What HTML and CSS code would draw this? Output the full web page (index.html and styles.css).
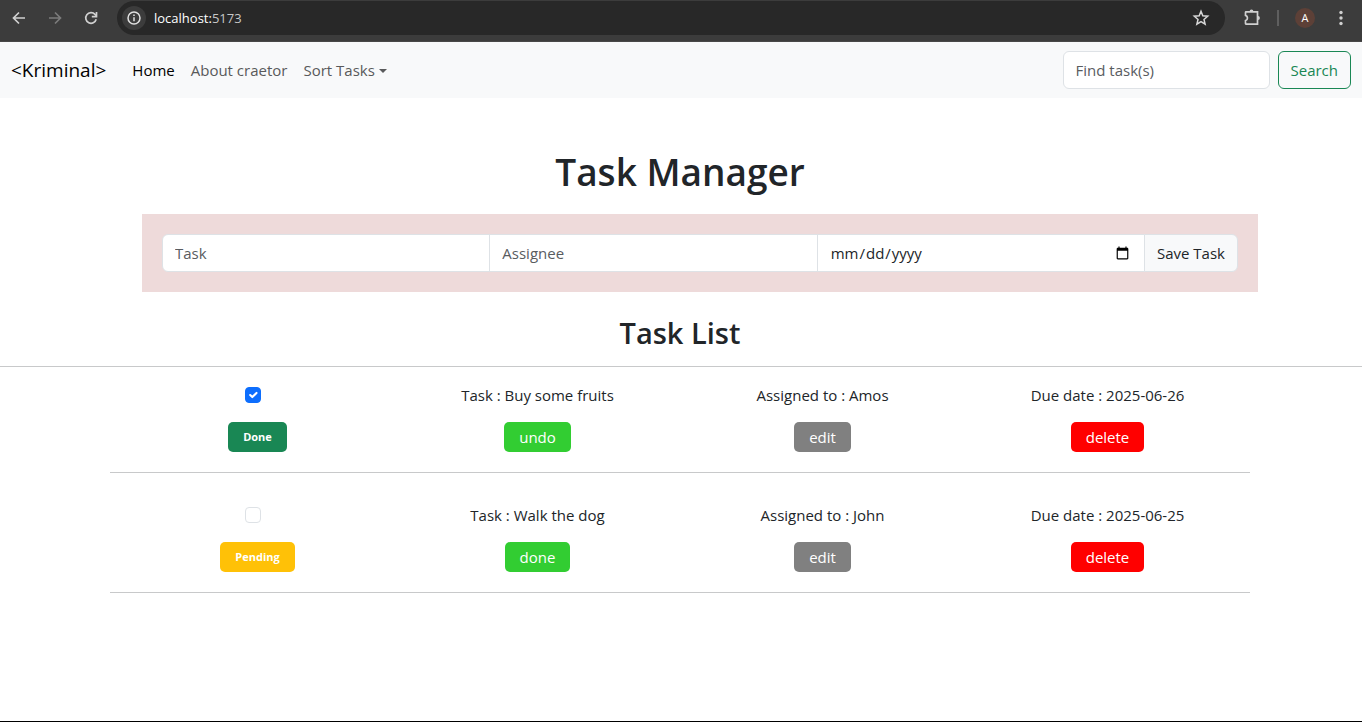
FILE: index.html
```html
<!DOCTYPE html>
<html lang="en">
<head>
<meta charset="utf-8">
<title>Task Manager</title>
<link rel="stylesheet" href="styles.css">
</head>
<body>
<div class="browser-bar">
  <div class="history">
    <button class="tool" type="button" aria-label="Back">
      <svg width="16" height="16" viewBox="0 0 16 16" fill="none" stroke="#d0d0d0" stroke-width="1.7"><path d="M14 8H3M8 2.5 2.5 8 8 13.5"/></svg>
    </button>
    <button class="tool" type="button" aria-label="Forward">
      <svg width="16" height="16" viewBox="0 0 16 16" fill="none" stroke="#7b7b7b" stroke-width="1.7"><path d="M2 8h11M8 2.5 13.500 8 8 13.500"/></svg>
    </button>
    <button class="tool" type="button" aria-label="Reload">
      <svg width="16" height="16" viewBox="0 0 16 16" fill="none" stroke="#d0d0d0" stroke-width="1.7"><path d="M13.200 9.300A5.300 5.300 0 1 1 12 4.400L13.500 6"/><path d="M13.500 2v4.700H8.800"/></svg>
    </button>
  </div>
  <div class="address">
    <button class="site-info" type="button" aria-label="Site information">
      <svg width="16" height="16" viewBox="0 0 16 16" fill="none" stroke="#e0e0e0" stroke-width="1.500"><circle cx="8" cy="8" r="6"/><path d="M8 7.200v4M8 4.500v1.500"/></svg>
    </button>
    <span class="url"><span class="host">localhost:</span>5173</span>
    <button class="tool" type="button" aria-label="Bookmark">
      <svg width="18" height="18" viewBox="0 0 18 18" fill="none" stroke="#d8d8d8" stroke-width="1.500"><path d="m9 2.300 1.800 4.500 4.900.4-3.700 3.200 1.100 4.800L9 12.600l-4.100 2.600L6 10.400 2.300 7.200l4.900-.4z"/></svg>
    </button>
  </div>
  <button class="tool extensions" type="button" aria-label="Extensions">
    <svg width="18" height="18" viewBox="0 0 18 18" fill="none" stroke="#d0d0d0" stroke-width="1.700"><path d="M3 2.900h11.500v12.200H3q-.5 0-.5-.5v-3a2.700 2.700 0 0 0 0-5.200v-3q0-.5.5-.5z"/><path d="M6.600 2.500a1.900 1.900 0 0 1 3.800 0zM15 7.100a1.900 1.900 0 0 1 0 3.800z" fill="#d0d0d0" stroke="none"/></svg>
  </button>
  <span class="divider"></span>
  <button class="avatar" type="button">A</button>
  <button class="tool menu" type="button" aria-label="Menu">
    <svg width="16" height="16" viewBox="0 0 16 16" fill="#d0d0d0"><circle cx="8" cy="2.500" r="1.700"/><circle cx="8" cy="8" r="1.700"/><circle cx="8" cy="13.500" r="1.700"/></svg>
  </button>
</div>

<nav class="navbar">
  <a class="brand" href="#">&lt;Kriminal&gt;</a>
  <a class="nav-link active" href="#">Home</a>
  <a class="nav-link" href="#">About craetor</a>
  <a class="nav-link dropdown" href="#">Sort Tasks</a>
  <form class="search">
    <input class="field search-field" type="search" placeholder="Find task(s)" aria-label="Find tasks">
    <button class="search-button" type="submit">Search</button>
  </form>
</nav>

<main class="page">
  <h1 class="title">Task Manager</h1>
  <div class="container">
    <form class="task-form">
      <input class="field" type="text" placeholder="Task" aria-label="Task">
      <input class="field" type="text" placeholder="Assignee" aria-label="Assignee">
      <input class="field" type="date" aria-label="Due date">
      <button class="save" type="submit">Save Task</button>
    </form>
  </div>
  <h2 class="subtitle">Task List</h2>
  <hr class="rule">
  <ul class="container tasks">
    <li class="task">
      <div class="cell"><input class="check" type="checkbox" aria-label="Buy some fruits" checked></div>
      <div class="cell">Task : Buy some fruits</div>
      <div class="cell">Assigned to : Amos</div>
      <div class="cell">Due date : 2025-06-26</div>
      <div class="cell"><span class="badge finished">Done</span></div>
      <div class="cell"><button class="action toggle" type="button">undo</button></div>
      <div class="cell"><button class="action edit" type="button">edit</button></div>
      <div class="cell"><button class="action delete" type="button">delete</button></div>
    </li>
    <li class="task">
      <div class="cell"><input class="check" type="checkbox" aria-label="Walk the dog"></div>
      <div class="cell">Task : Walk the dog</div>
      <div class="cell">Assigned to : John</div>
      <div class="cell">Due date : 2025-06-25</div>
      <div class="cell"><span class="badge pending">Pending</span></div>
      <div class="cell"><button class="action toggle" type="button">done</button></div>
      <div class="cell"><button class="action edit" type="button">edit</button></div>
      <div class="cell"><button class="action delete" type="button">delete</button></div>
    </li>
  </ul>
</main>
</body>
</html>
```
FILE: styles.css
```css
* {
  box-sizing: border-box;
}

body {
  display: flex;
  flex-direction: column;
  min-height: 100vh;
  margin: 0;
  border-bottom: 1px solid #000;
  background: #fff;
  color: #212529;
  font-family: "Open Sans", "Noto Sans", sans-serif;
  font-size: 15px;
  line-height: 24px;
}

button,
input {
  margin: 0;
  font: inherit;
  color: inherit;
}

svg {
  display: block;
}

/* Browser toolbar */
.browser-bar {
  display: flex;
  align-items: center;
  height: 42px;
  padding: 0 13px 6px 11px;
  background: #3c3c3c;
  border-bottom: 1px solid #484848;
}

.tool,
.site-info,
.avatar {
  display: flex;
  align-items: center;
  justify-content: center;
  flex: none;
  padding: 0;
  border: 0;
  background: none;
}

.history {
  display: flex;
  gap: 20px;
  margin-right: 18px;
}

.address {
  display: flex;
  align-items: center;
  flex: 1;
  height: 34px;
  padding: 0 15px 0 5px;
  border-radius: 17px;
  background: #282828;
  color: #c7c7c7;
  font-size: 13px;
}

.site-info {
  width: 24px;
  height: 24px;
  border-radius: 12px;
  background: #3c3c3c;
}

.url {
  flex: 1;
  margin-left: 8px;
}

.host {
  color: #fff;
}

.extensions {
  margin: 0 16px 0 18px;
}

.divider {
  width: 2px;
  height: 16px;
  background: #5f5f5f;
}

.avatar {
  width: 20px;
  height: 20px;
  margin: 0 18px 0 16px;
  border-radius: 10px;
  background: #5d4037;
  color: #fff;
  font-size: 11px;
}

/* Navigation */
.navbar {
  display: flex;
  align-items: center;
  height: 56px;
  padding: 0 11px;
  background: #f8f9fa;
}

.brand,
.nav-link {
  color: #595a5b;
  text-decoration: none;
}

.brand {
  margin-right: 18px;
  color: #000;
  font-size: 19px;
}

.nav-link {
  padding: 8px;
}

.nav-link.active {
  color: #000;
}

.dropdown::after {
  content: "";
  display: inline-block;
  margin-left: 4px;
  vertical-align: 3px;
  border: 4px solid transparent;
  border-top-color: currentColor;
  border-bottom: 0;
}

.search {
  display: flex;
  gap: 8px;
  margin-left: auto;
}

.field {
  height: 38px;
  padding: 6px 12px;
  border: 1px solid #dee2e6;
  border-radius: 6px;
  background: #fff;
  appearance: none;
}

.field::placeholder {
  color: #595c5f;
  opacity: 1;
}

.search-field {
  width: 207px;
}

.search-button {
  padding: 6px 12px;
  border: 1px solid #198754;
  border-radius: 6px;
  background: transparent;
  color: #198754;
}

/* Page */
.page {
  flex: 1;
}

.title,
.subtitle {
  margin: 0;
  padding-right: 2px;
  font-weight: 600;
  text-align: center;
}

.title {
  padding-top: 50px;
  font-size: 37px;
  line-height: 48px;
}

.subtitle {
  padding-top: 20px;
  font-size: 29px;
  line-height: 42px;
}

.container {
  max-width: 1142px;
  margin: 0 auto;
  padding-right: 2px;
}

.task-form {
  display: flex;
  margin: 18px -8px 0 32px;
  padding: 20px;
  background: #eedada;
}

.task-form .field {
  flex: 1;
  min-width: 0;
  border-top-right-radius: 0;
  border-bottom-right-radius: 0;
}

.task-form .field:not(:first-child) {
  margin-left: -1px;
  border-top-left-radius: 0;
  border-bottom-left-radius: 0;
}

.save {
  margin-left: -1px;
  padding: 6px 12px;
  border: 1px solid #dee2e6;
  border-radius: 0 6px 6px 0;
  background: #f8f9fa;
}

.rule {
  margin: 12px 0 0;
  border: 0;
  border-top: 1px solid #c8c9ca;
}

.tasks {
  padding-left: 0;
  list-style: none;
}

.task {
  display: grid;
  grid-template-columns: repeat(4, 1fr);
  row-gap: 15px;
  padding: 16px 0 20px;
  border-bottom: 1px solid #c8c9ca;
}

.task + .task {
  padding-top: 30px;
}

.cell {
  display: flex;
  align-items: center;
  justify-content: center;
}

.check {
  width: 16px;
  height: 16px;
  border: 1px solid #dee2e6;
  border-radius: 4px;
  background: #fff;
  appearance: none;
}

.check:checked {
  border-color: #0d6efd;
  background: #0d6efd url("data:image/svg+xml,%3csvg xmlns='http://www.w3.org/2000/svg' viewBox='0 0 20 20'%3e%3cpath fill='none' stroke='%23fff' stroke-linecap='round' stroke-linejoin='round' stroke-width='3' d='m6 10 3 3 6-6'/%3e%3c/svg%3e") center / contain no-repeat;
}

.badge,
.action {
  height: 30px;
  border: 0;
  border-radius: 5px;
  color: #fff;
  line-height: 30px;
}

.badge {
  margin-left: 10px;
  padding: 0 15px;
  font-size: 11px;
  font-weight: 700;
}

.action {
  padding: 0 15px;
}

.finished {
  background: #198754;
}

.pending {
  background: #ffc107;
}

.toggle {
  background: #32cd32;
}

.edit {
  background: #808080;
}

.delete {
  background: #f00;
}
```
